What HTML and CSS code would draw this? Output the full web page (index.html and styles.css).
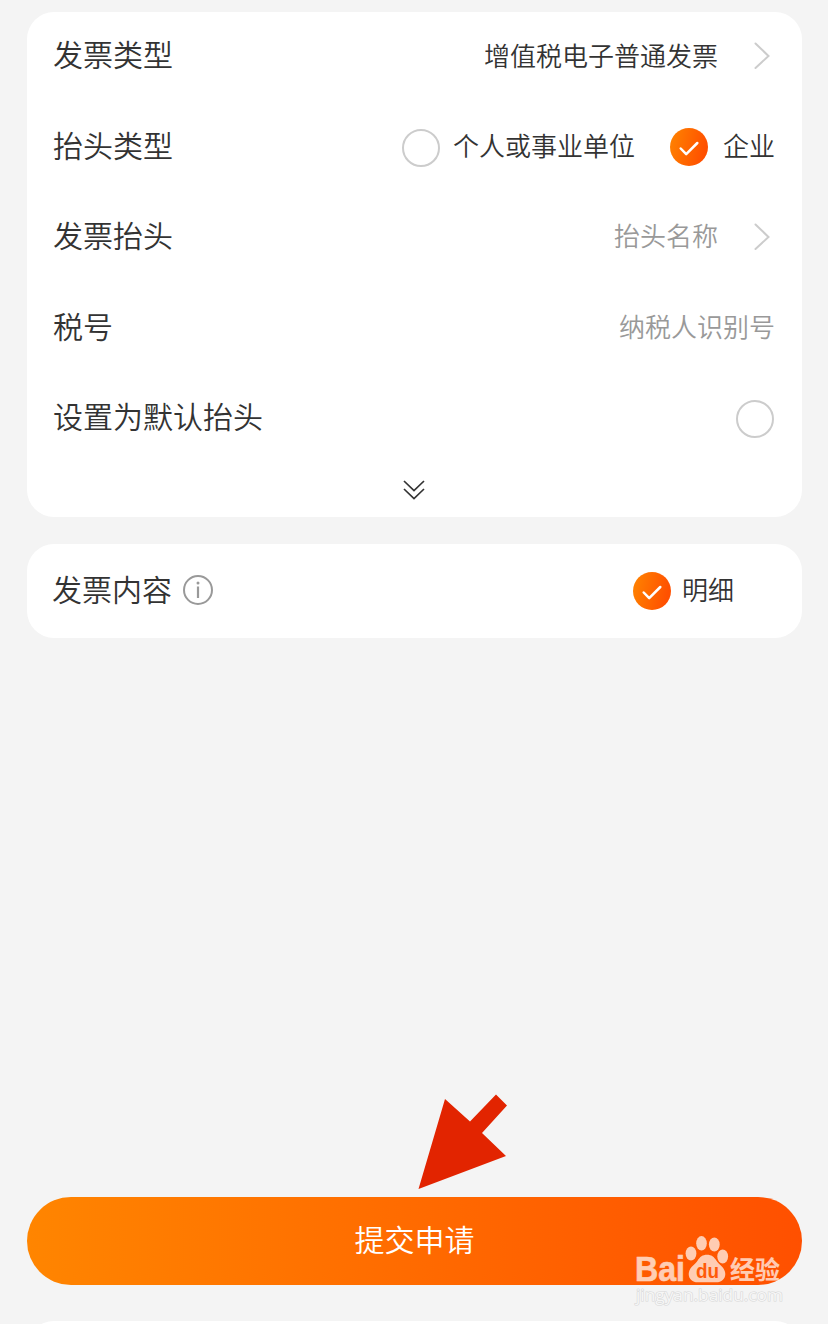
FILE: index.html
```
<!DOCTYPE html>
<html lang="zh-CN">
<head>
  <meta charset="utf-8">
  <meta name="viewport" content="width=device-width, initial-scale=1">
  <link rel="stylesheet" href="styles.css">
  <title>申请发票</title>
</head>
<body>

<!-- shared icons -->
<svg class="defs" width="0" height="0">
  <defs>
    <linearGradient id="orange" x1="0" y1="0" x2="1" y2="0.25">
      <stop offset="0" stop-color="#ff8500"/>
      <stop offset="1" stop-color="#ff5000"/>
    </linearGradient>
    <symbol id="checked" viewBox="0 0 38 38">
      <circle cx="19" cy="19" r="19" fill="url(#orange)"/>
      <path d="M10.700 20.500l5.500 5.700L27.300 15" fill="none" stroke="#fff" stroke-width="2.500" stroke-linecap="round" stroke-linejoin="round"/>
    </symbol>
    <symbol id="arrow" viewBox="0 0 16 28">
      <path d="M1.500 1.500L14.500 14 1.500 26" fill="none" stroke="#ccc" stroke-width="2" stroke-linecap="round"/>
    </symbol>
  </defs>
</svg>

<div class="container">
  <div class="card form">
    <div class="row">
      <span class="label">发票类型</span>
      <span class="value">增值税电子普通发票</span>
      <svg class="arrow"><use href="#arrow"/></svg>
    </div>
    <div class="row">
      <span class="label">抬头类型</span>
      <span class="radio"></span>
      <span class="option">个人或事业单位</span>
      <svg class="checked"><use href="#checked"/></svg>
      <span class="option last">企业</span>
    </div>
    <div class="row">
      <span class="label">发票抬头</span>
      <span class="value placeholder">抬头名称</span>
      <svg class="arrow"><use href="#arrow"/></svg>
    </div>
    <div class="row">
      <span class="label">税号</span>
      <span class="value placeholder">纳税人识别号</span>
    </div>
    <div class="row">
      <span class="label">设置为默认抬头</span>
      <span class="radio default"></span>
    </div>
    <svg class="more" viewBox="0 0 22 20">
      <path d="M1 1l10 9.500L21 1M1 9l10 9.500L21 9" fill="none" stroke="#333" stroke-width="1.700"/>
    </svg>
  </div>

  <div class="card detail">
    <span class="label">发票内容
      <svg class="info" viewBox="0 0 30 30">
        <circle cx="15" cy="15" r="14" fill="none" stroke="#999" stroke-width="2"/>
        <circle cx="15" cy="8" r="1.500" fill="#999"/>
        <path d="M15 11.500v11.500" stroke="#999" stroke-width="2.200"/>
      </svg>
    </span>
    <svg class="checked"><use href="#checked"/></svg>
    <span class="option">明细</span>
  </div>

  <div class="footer">
    <button class="submit">提交申请</button>
  </div>
  <div class="card next"></div>
</div>

<svg class="pointer" viewBox="0 0 90 96">
  <path d="M0.500 95L27 5l25 22.500L78 0.500l11 11L64 39l24 23z" fill="#e22400"/>
</svg>

<svg class="watermark" viewBox="0 0 160 76">
  <g class="brand">
    <text x="5" y="49" class="bai" textLength="50" lengthAdjust="spacingAndGlyphs">Bai</text>
    <ellipse cx="61" cy="21.500" rx="5.400" ry="7"/>
    <ellipse cx="71.500" cy="11.300" rx="5.300" ry="7.300"/>
    <ellipse cx="84.300" cy="12.500" rx="5.400" ry="7"/>
    <ellipse cx="92.700" cy="24.500" rx="5.400" ry="7"/>
    <path d="M77 22.800c-4.500 0-7 2-9.500 6-2.300 3.700-8.800 7-8.800 13.200 0 5 3.800 8.300 9 8.300h18.600c5.200 0 9-3.300 9-8.300 0-6.200-6.500-9.500-8.800-13.200-2.500-4-5-6-9.500-6z"/>
    <text x="100" y="47" class="jingyan" textLength="50">经验</text>
  </g>
  <text x="66" y="45.500" class="du" textLength="23" lengthAdjust="spacingAndGlyphs">du</text>
  <text x="6" y="69" class="site" textLength="147" lengthAdjust="spacingAndGlyphs">jingyan.baidu.com</text>
</svg>

</body>
</html>
```
FILE: styles.css
```
html, body {
  height: 100%;
}

body {
  margin: 0;
  overflow: hidden;
  background-color: #f4f4f4;
  color: #333;
  font-family: 'Noto Sans CJK SC', sans-serif;
  font-weight: 350;
}

.defs {
  position: absolute;
}

.container {
  box-sizing: border-box;
  display: flex;
  flex-direction: column;
  height: 1324px;
  padding: 12px 26px 0 27px;
  overflow: hidden;
}

.card {
  box-sizing: border-box;
  border-radius: 27px;
  background-color: #fff;
}

.form {
  display: flex;
  flex-direction: column;
  gap: 46.500px;
  height: 505px;
  padding: 22px 27px 0 26px;
}

.row {
  display: flex;
  align-items: center;
  height: 44px;
  flex-shrink: 0;
}

.label {
  display: flex;
  align-items: center;
  margin-right: auto;
  padding-bottom: 6px;
  font-size: 30px;
  line-height: 44px;
}

.value, .option {
  padding-bottom: 4px;
  font-size: 26px;
  line-height: 44px;
}

.row:first-child .value {
  padding-bottom: 3px;
}

.placeholder {
  color: #999;
}

.arrow {
  width: 16px;
  height: 28px;
  margin: 0 5px 0 36px;
}

.radio {
  box-sizing: border-box;
  width: 38px;
  height: 38px;
  margin-top: 2px;
  border: 2px solid #ccc;
  border-radius: 50%;
}

.default {
  margin-right: 1px;
}

.checked {
  width: 38px;
  height: 38px;
}

.radio + .option {
  margin: 0 35px 0 13px;
}

.last {
  margin-left: 15px;
}

.more {
  width: 22px;
  height: 20px;
  flex-shrink: 0;
  align-self: center;
  margin-top: -7px;
}

.detail {
  display: flex;
  align-items: center;
  height: 94px;
  margin-top: 27px;
  padding: 0 68px 0 25px;
}

.info {
  width: 30px;
  height: 30px;
  margin: 4px 0 0 11px;
}

.detail .option {
  margin-left: 11px;
}

.footer {
  margin-top: auto;
  padding-bottom: 36px;
}

.submit {
  display: block;
  width: 100%;
  height: 88px;
  padding: 0 0 6px;
  border: 0;
  border-radius: 44px;
  background-image: linear-gradient(to right, #ff8500, #ff5000);
  color: #fff;
  font-family: inherit;
  font-size: 30px;
  font-weight: inherit;
}

/* only its top edge reaches the screen */
.next {
  height: 94px;
  flex-shrink: 0;
  margin-bottom: -91px;
}

.pointer {
  position: absolute;
  left: 418px;
  top: 1094px;
  width: 90px;
  height: 96px;
}

.watermark {
  position: absolute;
  left: 630px;
  top: 1232px;
  width: 160px;
  height: 76px;
}

.brand {
  fill: #fff;
  opacity: 0.7;
}

.bai {
  font: bold 35px 'Liberation Sans', sans-serif;
  stroke: #fff;
  stroke-width: 0.6px;
}

.jingyan {
  font-size: 25px;
  font-weight: bold;
}

.du {
  fill: #ff5a08;
  font: bold 20px 'Liberation Sans', sans-serif;
}

.site {
  fill: #f6f6f6;
  stroke: #d8d8d8;
  stroke-width: 1.200px;
  paint-order: stroke;
  font: 17px 'Open Sans', sans-serif;
}
```
